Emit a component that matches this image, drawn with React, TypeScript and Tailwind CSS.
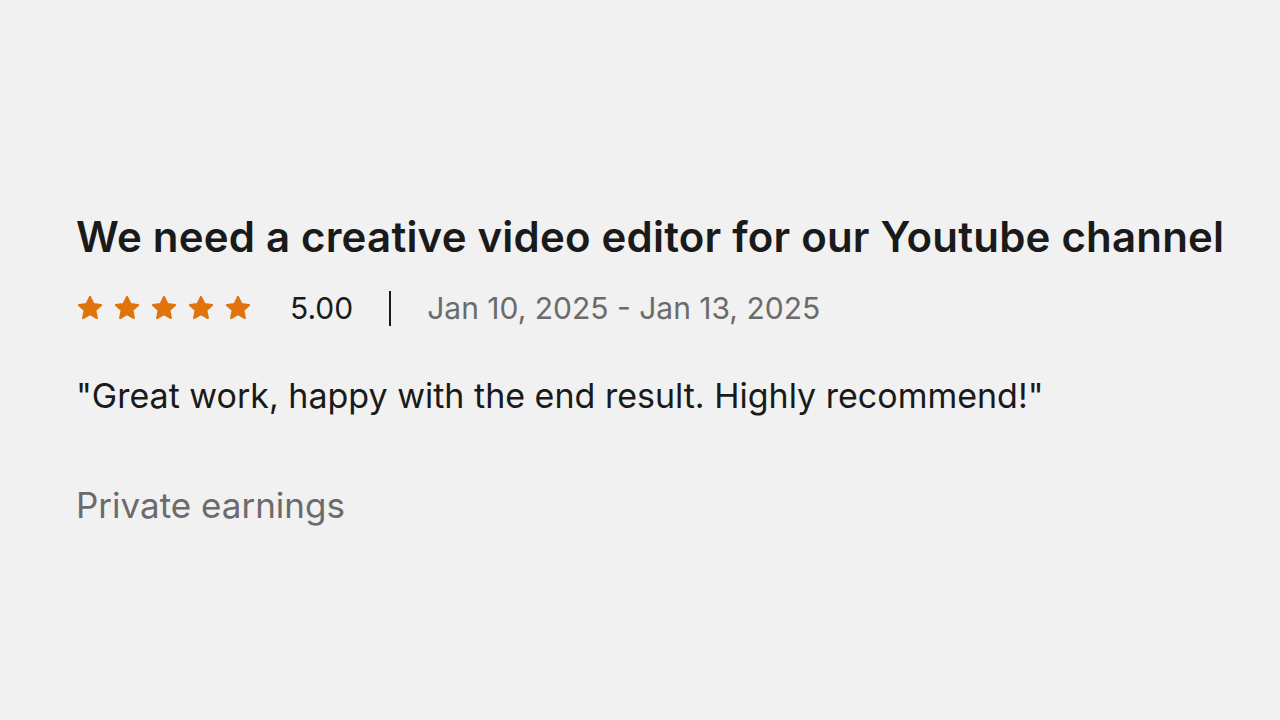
const Star = () => (
  <svg viewBox="0 0 24 24" className="h-[28px] w-[28px]" fill="#e0730b" stroke="#e0730b" strokeWidth="1.8" strokeLinejoin="round">
    <path d="M12 2.5l2.9 6.1 6.6.8-4.9 4.6 1.3 6.6L12 17.3l-5.9 3.3 1.3-6.6-4.9-4.6 6.6-.8z" />
  </svg>
);

export default function App() {
  return (
    <div className="min-h-screen bg-[#f1f1f1] px-[76px] pt-[211px] text-[#1a1a1a] font-['Inter',sans-serif]">
      <h1 className="whitespace-nowrap text-[42px] font-semibold leading-[52px] tracking-[0.2px]">
        We need a creative video editor for our Youtube channel
      </h1>
      <div className="mt-[27px] flex h-[36px] items-center">
        <div className="flex gap-[9px]">
          <Star />
          <Star />
          <Star />
          <Star />
          <Star />
        </div>
        <span className="ml-[38px] text-[30px] leading-[36px]">5.00</span>
        <span className="mx-[36px] h-[35px] w-[2px] bg-[#1a1a1a]" />
        <span className="text-[30px] leading-[36px] text-[#6b6b6b]">Jan 10, 2025 - Jan 13, 2025</span>
      </div>
      <p className="mt-[49px] text-[34px] leading-[41px]">
        "Great work, happy with the end result. Highly recommend!"
      </p>
      <p className="mt-[68px] text-[35px] leading-[42px] text-[#6b6b6b]">Private earnings</p>
    </div>
  );
}
